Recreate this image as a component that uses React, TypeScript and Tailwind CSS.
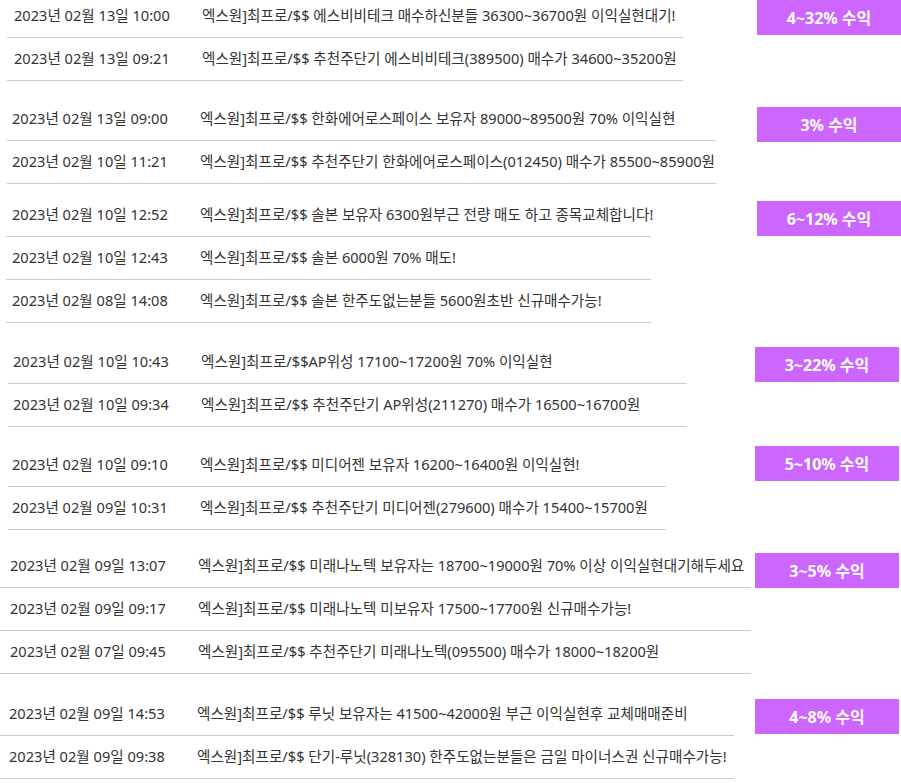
type Row = [string, string];

type Group = {
  gap: string;
  tableBox: string;
  pad: string;
  badge: string;
  badgeBox: string;
  rows: Row[];
};

const GROUPS: Group[] = [
  {
    gap: "-mt-[5px]",
    tableBox: "ml-[7px] w-[676px]",
    pad: "pl-[7px]",
    badge: "4~32% 수익",
    badgeBox: "mt-[5px] mr-0",
    rows: [
      ["2023년 02월 13일 10:00", "엑스원]최프로/$$ 에스비비테크 매수하신분들 36300~36700원 이익실현대기!"],
      ["2023년 02월 13일 09:21", "엑스원]최프로/$$ 추천주단기 에스비비테크(389500) 매수가 34600~35200원"],
    ],
  },
  {
    gap: "mt-[17px]",
    tableBox: "ml-[7px] w-[709px]",
    pad: "pl-[5px]",
    badge: "3% 수익",
    badgeBox: "mt-[9px] mr-0",
    rows: [
      ["2023년 02월 13일 09:00", "엑스원]최프로/$$ 한화에어로스페이스 보유자 89000~89500원 70% 이익실현"],
      ["2023년 02월 10일 11:21", "엑스원]최프로/$$ 추천주단기 한화에어로스페이스(012450) 매수가 85500~85900원"],
    ],
  },
  {
    gap: "mt-[10px]",
    tableBox: "ml-[6px] w-[645px]",
    pad: "pl-[6px]",
    badge: "6~12% 수익",
    badgeBox: "mt-[7px] mr-0",
    rows: [
      ["2023년 02월 10일 12:52", "엑스원]최프로/$$ 솔본 보유자 6300원부근 전량 매도 하고 종목교체합니다!"],
      ["2023년 02월 10일 12:43", "엑스원]최프로/$$ 솔본 6000원 70% 매도!"],
      ["2023년 02월 08일 14:08", "엑스원]최프로/$$ 솔본 한주도없는분들 5600원초반 신규매수가능!"],
    ],
  },
  {
    gap: "mt-[18px]",
    tableBox: "ml-[8px] w-[679px]",
    pad: "pl-[5px]",
    badge: "3~22% 수익",
    badgeBox: "mt-[6px] mr-[2px]",
    rows: [
      ["2023년 02월 10일 10:43", "엑스원]최프로/$$AP위성 17100~17200원 70% 이익실현"],
      ["2023년 02월 10일 09:34", "엑스원]최프로/$$ 추천주단기 AP위성(211270) 매수가 16500~16700원"],
    ],
  },
  {
    gap: "mt-[17px]",
    tableBox: "ml-[8px] w-[658px]",
    pad: "pl-[4px]",
    badge: "5~10% 수익",
    badgeBox: "mt-[2px] mr-[2px]",
    rows: [
      ["2023년 02월 10일 09:10", "엑스원]최프로/$$ 미디어젠 보유자 16200~16400원 이익실현!"],
      ["2023년 02월 09일 10:31", "엑스원]최프로/$$ 추천주단기 미디어젠(279600) 매수가 15400~15700원"],
    ],
  },
  {
    gap: "mt-[15px]",
    tableBox: "ml-0 w-[751px]",
    pad: "pl-[10px]",
    badge: "3~5% 수익",
    badgeBox: "mt-[8px] mr-[2px]",
    rows: [
      ["2023년 02월 09일 13:07", "엑스원]최프로/$$ 미래나노텍 보유자는 18700~19000원 70% 이상 이익실현대기해두세요"],
      ["2023년 02월 09일 09:17", "엑스원]최프로/$$ 미래나노텍 미보유자 17500~17700원 신규매수가능!"],
      ["2023년 02월 07일 09:45", "엑스원]최프로/$$ 추천주단기 미래나노텍(095500) 매수가 18000~18200원"],
    ],
  },
  {
    gap: "mt-[19px]",
    tableBox: "ml-0 w-[734px]",
    pad: "pl-[9px]",
    badge: "4~8% 수익",
    badgeBox: "mt-[6px] mr-[2px]",
    rows: [
      ["2023년 02월 09일 14:53", "엑스원]최프로/$$ 루닛 보유자는 41500~42000원 부근 이익실현후 교체매매준비"],
      ["2023년 02월 09일 09:38", "엑스원]최프로/$$ 단기-루닛(328130) 한주도없는분들은 금일 마이너스권 신규매수가능!"],
    ],
  },
];

function SignalGroup({ group }: { group: Group }) {
  return (
    <div className={`flex items-start ${group.gap}`}>
      <div className={`shrink-0 ${group.tableBox}`}>
        {group.rows.map(([date, msg], i) => (
          <div
            key={i}
            className={`flex items-center h-[43px] border-b border-[#cccccc] whitespace-nowrap ${group.pad}`}
          >
            <span className="w-[188px] shrink-0">{date}</span>
            <span>{msg}</span>
          </div>
        ))}
      </div>
      <div
        className={`ml-auto w-[144px] h-[35px] shrink-0 flex items-center justify-center bg-[#cc66ff] text-white font-bold text-[16px] ${group.badgeBox}`}
      >
        {group.badge}
      </div>
    </div>
  );
}

export default function App() {
  return (
    <div className="w-[901px] h-[783px] overflow-hidden bg-white text-[#333333] text-[14.6px] font-['Noto_Sans','Noto_Sans_CJK_KR',sans-serif]">
      {GROUPS.map((g, i) => (
        <SignalGroup key={i} group={g} />
      ))}
    </div>
  );
}
